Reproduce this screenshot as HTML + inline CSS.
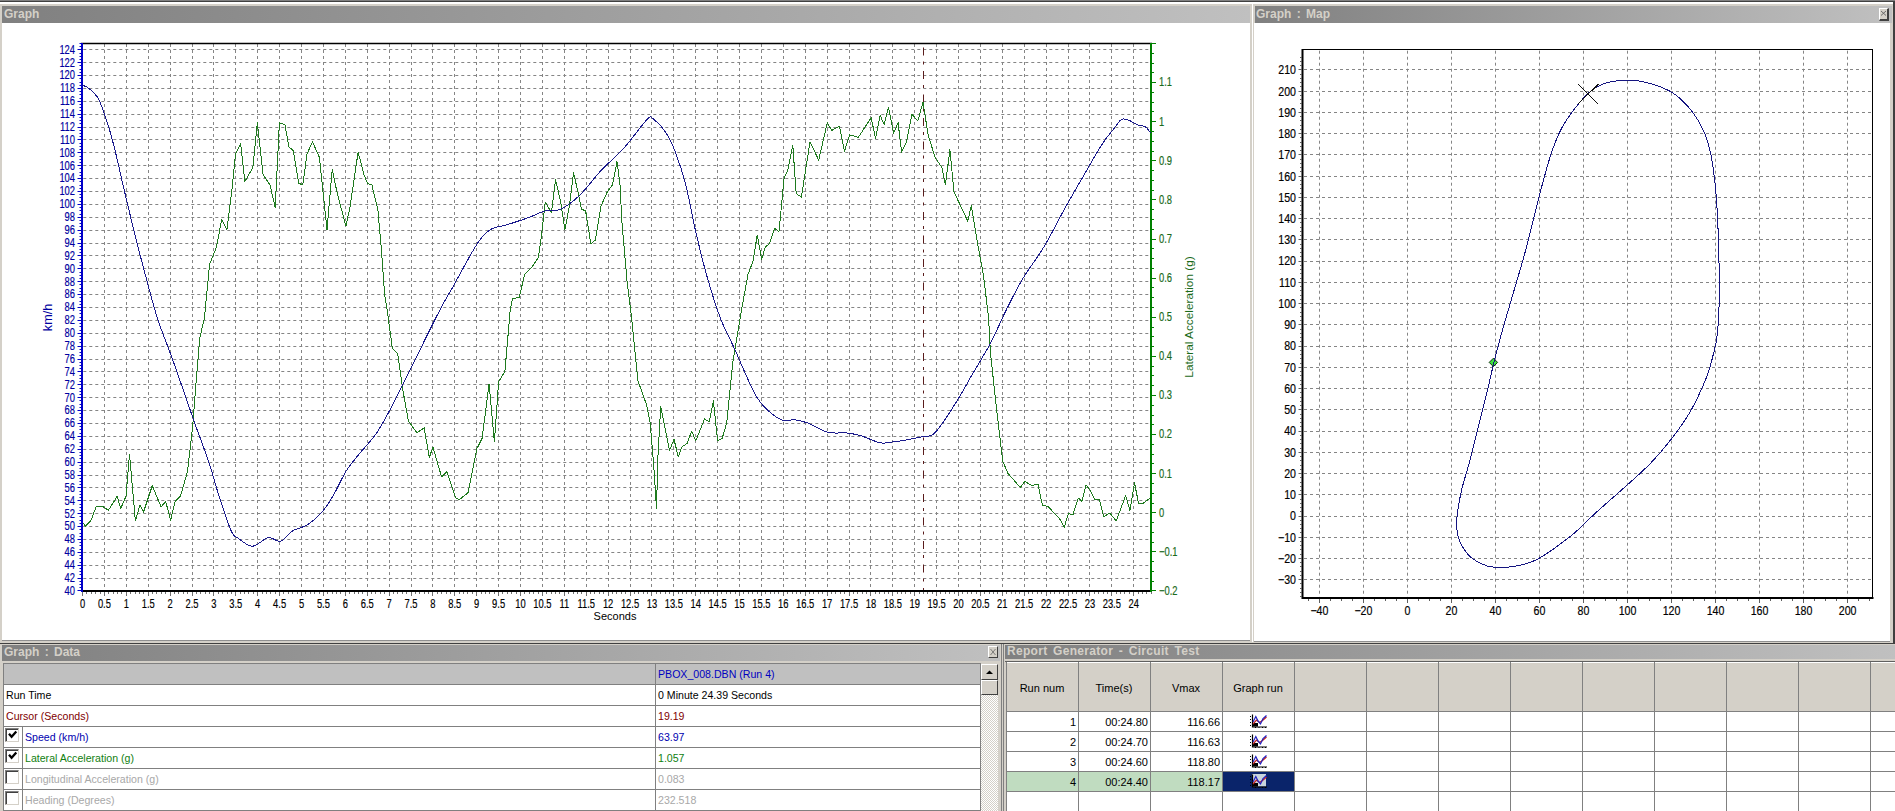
<!DOCTYPE html>
<html><head><meta charset="utf-8"><style>
html,body{margin:0;padding:0;width:1895px;height:811px;overflow:hidden;background:#d4d0c8;font-family:'Liberation Sans', sans-serif;}
.abs{position:absolute}
.tb{position:absolute;height:17px;word-spacing:2px;background:linear-gradient(to right,#808080,#c0c0c0);color:#d4d0c8;font:bold 12px 'Liberation Sans', sans-serif;line-height:17px;white-space:pre;}
.dl{position:absolute;font-size:10.6px;line-height:20px;white-space:nowrap}
.cb{position:absolute;left:5px;width:12px;height:12px;border-top:1px solid #808080;border-left:1px solid #808080;border-right:1px solid #d4d0c8;border-bottom:1px solid #d4d0c8;background:#fff;box-shadow:inset 1px 1px 0 #404040}
.ck{position:absolute;left:5px}
.rc{position:absolute;font-size:11px;line-height:14px;text-align:right;white-space:nowrap}
.rh{position:absolute;top:664px;height:49px;font-size:11px;line-height:49px;text-align:center;color:#000}
</style></head><body>
<div class="abs" style="left:0;top:0;width:1895px;height:1px;background:#808080"></div>
<div class="abs" style="left:0;top:1px;width:1895px;height:1px;background:#404040"></div>
<div class="abs" style="left:0;top:2px;width:1895px;height:2px;background:#fff"></div>

<!-- Graph panel -->
<div class="abs" style="left:2px;top:23px;width:1248px;height:617px;background:#fff"></div>
<div class="tb" style="left:2px;top:6px;width:1248px;padding-left:2px;box-sizing:border-box">Graph</div>
<!-- Map panel -->
<div class="abs" style="left:1252px;top:4px;width:1px;height:638px;background:#ffffff"></div>
<div class="abs" style="left:1254px;top:23px;width:636px;height:618px;background:#fff"></div>
<div class="tb" style="left:1255px;top:6px;width:637px;padding-left:1px;box-sizing:border-box">Graph : Map</div>
<div class="abs" style="left:1879px;top:8px;width:10px;height:13px;background:#d4d0c8;border-top:1px solid #fff;border-left:1px solid #fff;border-right:2px solid #404040;border-bottom:2px solid #404040;box-sizing:border-box"></div>
<svg class="abs" style="left:1879px;top:8px" width="10" height="13"><path d="M2 3L7 7.5M7 3L2 7.5" stroke="#606060" stroke-width="0.9"/></svg>
<div class="abs" style="left:1893px;top:2px;width:2px;height:642px;background:#404040"></div>
<div class="abs" style="left:0;top:643px;width:1895px;height:1px;background:#404040"></div>
<div class="abs" style="left:2px;top:640px;width:1248px;height:1px;background:#909090"></div>
<div class="abs" style="left:1254px;top:641px;width:636px;height:1px;background:#909090"></div>

<svg class="abs" style="left:0;top:0" width="1895" height="811">
<path d="M104.5 44.0V589.5M126.5 44.0V589.5M148.5 44.0V589.5M170.5 44.0V589.5M192.5 44.0V589.5M213.5 44.0V589.5M235.5 44.0V589.5M257.5 44.0V589.5M279.5 44.0V589.5M301.5 44.0V589.5M323.5 44.0V589.5M345.5 44.0V589.5M367.5 44.0V589.5M389.5 44.0V589.5M411.5 44.0V589.5M432.5 44.0V589.5M454.5 44.0V589.5M476.5 44.0V589.5M498.5 44.0V589.5M520.5 44.0V589.5M542.5 44.0V589.5M564.5 44.0V589.5M586.5 44.0V589.5M608.5 44.0V589.5M630.5 44.0V589.5M651.5 44.0V589.5M673.5 44.0V589.5M695.5 44.0V589.5M717.5 44.0V589.5M739.5 44.0V589.5M761.5 44.0V589.5M783.5 44.0V589.5M805.5 44.0V589.5M827.5 44.0V589.5M849.5 44.0V589.5M870.5 44.0V589.5M892.5 44.0V589.5M914.5 44.0V589.5M936.5 44.0V589.5M958.5 44.0V589.5M980.5 44.0V589.5M1002.5 44.0V589.5M1024.5 44.0V589.5M1046.5 44.0V589.5M1068.5 44.0V589.5M1089.5 44.0V589.5M1111.5 44.0V589.5M1133.5 44.0V589.5M83.3 578.5H1150.0M83.3 565.5H1150.0M83.3 552.5H1150.0M83.3 539.5H1150.0M83.3 526.5H1150.0M83.3 513.5H1150.0M83.3 500.5H1150.0M83.3 487.5H1150.0M83.3 475.5H1150.0M83.3 462.5H1150.0M83.3 449.5H1150.0M83.3 436.5H1150.0M83.3 423.5H1150.0M83.3 410.5H1150.0M83.3 397.5H1150.0M83.3 384.5H1150.0M83.3 371.5H1150.0M83.3 359.5H1150.0M83.3 346.5H1150.0M83.3 333.5H1150.0M83.3 320.5H1150.0M83.3 307.5H1150.0M83.3 294.5H1150.0M83.3 281.5H1150.0M83.3 268.5H1150.0M83.3 255.5H1150.0M83.3 243.5H1150.0M83.3 230.5H1150.0M83.3 217.5H1150.0M83.3 204.5H1150.0M83.3 191.5H1150.0M83.3 178.5H1150.0M83.3 165.5H1150.0M83.3 152.5H1150.0M83.3 139.5H1150.0M83.3 127.5H1150.0M83.3 114.5H1150.0M83.3 101.5H1150.0M83.3 88.5H1150.0M83.3 75.5H1150.0M83.3 62.5H1150.0M83.3 49.5H1150.0" stroke="#858585" stroke-width="1" stroke-dasharray="3 3" fill="none"/>
<path d="M81 43.5H1152" stroke="#000" stroke-width="1.3"/>
<path d="M81 591H1152" stroke="#000" stroke-width="2"/>
<path d="M82.5 592V596M86.5 592V594M91.5 592V594M95.5 592V594M100.5 592V594M104.5 592V596M108.5 592V594M113.5 592V594M117.5 592V594M121.5 592V594M126.5 592V596M130.5 592V594M135.5 592V594M139.5 592V594M143.5 592V594M148.5 592V596M152.5 592V594M156.5 592V594M161.5 592V594M165.5 592V594M170.5 592V596M174.5 592V594M178.5 592V594M183.5 592V594M187.5 592V594M192.5 592V596M196.5 592V594M200.5 592V594M205.5 592V594M209.5 592V594M213.5 592V596M218.5 592V594M222.5 592V594M227.5 592V594M231.5 592V594M235.5 592V596M240.5 592V594M244.5 592V594M248.5 592V594M253.5 592V594M257.5 592V596M262.5 592V594M266.5 592V594M270.5 592V594M275.5 592V594M279.5 592V596M283.5 592V594M288.5 592V594M292.5 592V594M297.5 592V594M301.5 592V596M305.5 592V594M310.5 592V594M314.5 592V594M319.5 592V594M323.5 592V596M327.5 592V594M332.5 592V594M336.5 592V594M340.5 592V594M345.5 592V596M349.5 592V594M354.5 592V594M358.5 592V594M362.5 592V594M367.5 592V596M371.5 592V594M375.5 592V594M380.5 592V594M384.5 592V594M389.5 592V596M393.5 592V594M397.5 592V594M402.5 592V594M406.5 592V594M411.5 592V596M415.5 592V594M419.5 592V594M424.5 592V594M428.5 592V594M432.5 592V596M437.5 592V594M441.5 592V594M446.5 592V594M450.5 592V594M454.5 592V596M459.5 592V594M463.5 592V594M467.5 592V594M472.5 592V594M476.5 592V596M481.5 592V594M485.5 592V594M489.5 592V594M494.5 592V594M498.5 592V596M502.5 592V594M507.5 592V594M511.5 592V594M516.5 592V594M520.5 592V596M524.5 592V594M529.5 592V594M533.5 592V594M538.5 592V594M542.5 592V596M546.5 592V594M551.5 592V594M555.5 592V594M559.5 592V594M564.5 592V596M568.5 592V594M573.5 592V594M577.5 592V594M581.5 592V594M586.5 592V596M590.5 592V594M594.5 592V594M599.5 592V594M603.5 592V594M608.5 592V596M612.5 592V594M616.5 592V594M621.5 592V594M625.5 592V594M630.5 592V596M634.5 592V594M638.5 592V594M643.5 592V594M647.5 592V594M651.5 592V596M656.5 592V594M660.5 592V594M665.5 592V594M669.5 592V594M673.5 592V596M678.5 592V594M682.5 592V594M686.5 592V594M691.5 592V594M695.5 592V596M700.5 592V594M704.5 592V594M708.5 592V594M713.5 592V594M717.5 592V596M721.5 592V594M726.5 592V594M730.5 592V594M735.5 592V594M739.5 592V596M743.5 592V594M748.5 592V594M752.5 592V594M757.5 592V594M761.5 592V596M765.5 592V594M770.5 592V594M774.5 592V594M778.5 592V594M783.5 592V596M787.5 592V594M792.5 592V594M796.5 592V594M800.5 592V594M805.5 592V596M809.5 592V594M813.5 592V594M818.5 592V594M822.5 592V594M827.5 592V596M831.5 592V594M835.5 592V594M840.5 592V594M844.5 592V594M849.5 592V596M853.5 592V594M857.5 592V594M862.5 592V594M866.5 592V594M870.5 592V596M875.5 592V594M879.5 592V594M884.5 592V594M888.5 592V594M892.5 592V596M897.5 592V594M901.5 592V594M905.5 592V594M910.5 592V594M914.5 592V596M919.5 592V594M923.5 592V594M927.5 592V594M932.5 592V594M936.5 592V596M940.5 592V594M945.5 592V594M949.5 592V594M954.5 592V594M958.5 592V596M962.5 592V594M967.5 592V594M971.5 592V594M976.5 592V594M980.5 592V596M984.5 592V594M989.5 592V594M993.5 592V594M997.5 592V594M1002.5 592V596M1006.5 592V594M1011.5 592V594M1015.5 592V594M1019.5 592V594M1024.5 592V596M1028.5 592V594M1032.5 592V594M1037.5 592V594M1041.5 592V594M1046.5 592V596M1050.5 592V594M1054.5 592V594M1059.5 592V594M1063.5 592V594M1068.5 592V596M1072.5 592V594M1076.5 592V594M1081.5 592V594M1085.5 592V594M1089.5 592V596M1094.5 592V594M1098.5 592V594M1103.5 592V594M1107.5 592V594M1111.5 592V596M1116.5 592V594M1120.5 592V594M1124.5 592V594M1129.5 592V594M1133.5 592V596M1138.5 592V594M1142.5 592V594M1146.5 592V594M1151.5 592V594" stroke="#707070" stroke-width="1"/>
<g font-family="'Liberation Sans', sans-serif" font-size="12.5" fill="#000" stroke="#000" stroke-width="0.18" text-anchor="middle"><text transform="translate(82.5,608) scale(0.75,1)">0</text><text transform="translate(104.4,608) scale(0.75,1)">0.5</text><text transform="translate(126.3,608) scale(0.75,1)">1</text><text transform="translate(148.2,608) scale(0.75,1)">1.5</text><text transform="translate(170.1,608) scale(0.75,1)">2</text><text transform="translate(192.0,608) scale(0.75,1)">2.5</text><text transform="translate(213.9,608) scale(0.75,1)">3</text><text transform="translate(235.8,608) scale(0.75,1)">3.5</text><text transform="translate(257.7,608) scale(0.75,1)">4</text><text transform="translate(279.6,608) scale(0.75,1)">4.5</text><text transform="translate(301.5,608) scale(0.75,1)">5</text><text transform="translate(323.4,608) scale(0.75,1)">5.5</text><text transform="translate(345.3,608) scale(0.75,1)">6</text><text transform="translate(367.2,608) scale(0.75,1)">6.5</text><text transform="translate(389.1,608) scale(0.75,1)">7</text><text transform="translate(411.0,608) scale(0.75,1)">7.5</text><text transform="translate(432.9,608) scale(0.75,1)">8</text><text transform="translate(454.8,608) scale(0.75,1)">8.5</text><text transform="translate(476.7,608) scale(0.75,1)">9</text><text transform="translate(498.6,608) scale(0.75,1)">9.5</text><text transform="translate(520.5,608) scale(0.75,1)">10</text><text transform="translate(542.4,608) scale(0.75,1)">10.5</text><text transform="translate(564.3,608) scale(0.75,1)">11</text><text transform="translate(586.2,608) scale(0.75,1)">11.5</text><text transform="translate(608.1,608) scale(0.75,1)">12</text><text transform="translate(630.0,608) scale(0.75,1)">12.5</text><text transform="translate(651.9,608) scale(0.75,1)">13</text><text transform="translate(673.8,608) scale(0.75,1)">13.5</text><text transform="translate(695.7,608) scale(0.75,1)">14</text><text transform="translate(717.6,608) scale(0.75,1)">14.5</text><text transform="translate(739.5,608) scale(0.75,1)">15</text><text transform="translate(761.4,608) scale(0.75,1)">15.5</text><text transform="translate(783.3,608) scale(0.75,1)">16</text><text transform="translate(805.2,608) scale(0.75,1)">16.5</text><text transform="translate(827.1,608) scale(0.75,1)">17</text><text transform="translate(849.0,608) scale(0.75,1)">17.5</text><text transform="translate(870.9,608) scale(0.75,1)">18</text><text transform="translate(892.8,608) scale(0.75,1)">18.5</text><text transform="translate(914.7,608) scale(0.75,1)">19</text><text transform="translate(936.6,608) scale(0.75,1)">19.5</text><text transform="translate(958.5,608) scale(0.75,1)">20</text><text transform="translate(980.4,608) scale(0.75,1)">20.5</text><text transform="translate(1002.3,608) scale(0.75,1)">21</text><text transform="translate(1024.2,608) scale(0.75,1)">21.5</text><text transform="translate(1046.1,608) scale(0.75,1)">22</text><text transform="translate(1068.0,608) scale(0.75,1)">22.5</text><text transform="translate(1089.9,608) scale(0.75,1)">23</text><text transform="translate(1111.8,608) scale(0.75,1)">23.5</text><text transform="translate(1133.7,608) scale(0.75,1)">24</text></g>
<path d="M82 43V592" stroke="#0000c8" stroke-width="2"/>
<path d="M77.5 590.5H81M79.5 587.5H81M79.5 584.5H81M79.5 581.5H81M77.5 578.5H81M79.5 574.5H81M79.5 571.5H81M79.5 568.5H81M77.5 565.5H81M79.5 562.5H81M79.5 558.5H81M79.5 555.5H81M77.5 552.5H81M79.5 549.5H81M79.5 545.5H81M79.5 542.5H81M77.5 539.5H81M79.5 536.5H81M79.5 533.5H81M79.5 529.5H81M77.5 526.5H81M79.5 523.5H81M79.5 520.5H81M79.5 516.5H81M77.5 513.5H81M79.5 510.5H81M79.5 507.5H81M79.5 504.5H81M77.5 500.5H81M79.5 497.5H81M79.5 494.5H81M79.5 491.5H81M77.5 487.5H81M79.5 484.5H81M79.5 481.5H81M79.5 478.5H81M77.5 475.5H81M79.5 471.5H81M79.5 468.5H81M79.5 465.5H81M77.5 462.5H81M79.5 458.5H81M79.5 455.5H81M79.5 452.5H81M77.5 449.5H81M79.5 446.5H81M79.5 442.5H81M79.5 439.5H81M77.5 436.5H81M79.5 433.5H81M79.5 429.5H81M79.5 426.5H81M77.5 423.5H81M79.5 420.5H81M79.5 417.5H81M79.5 413.5H81M77.5 410.5H81M79.5 407.5H81M79.5 404.5H81M79.5 400.5H81M77.5 397.5H81M79.5 394.5H81M79.5 391.5H81M79.5 388.5H81M77.5 384.5H81M79.5 381.5H81M79.5 378.5H81M79.5 375.5H81M77.5 371.5H81M79.5 368.5H81M79.5 365.5H81M79.5 362.5H81M77.5 359.5H81M79.5 355.5H81M79.5 352.5H81M79.5 349.5H81M77.5 346.5H81M79.5 342.5H81M79.5 339.5H81M79.5 336.5H81M77.5 333.5H81M79.5 330.5H81M79.5 326.5H81M79.5 323.5H81M77.5 320.5H81M79.5 317.5H81M79.5 313.5H81M79.5 310.5H81M77.5 307.5H81M79.5 304.5H81M79.5 301.5H81M79.5 297.5H81M77.5 294.5H81M79.5 291.5H81M79.5 288.5H81M79.5 284.5H81M77.5 281.5H81M79.5 278.5H81M79.5 275.5H81M79.5 272.5H81M77.5 268.5H81M79.5 265.5H81M79.5 262.5H81M79.5 259.5H81M77.5 255.5H81M79.5 252.5H81M79.5 249.5H81M79.5 246.5H81M77.5 243.5H81M79.5 239.5H81M79.5 236.5H81M79.5 233.5H81M77.5 230.5H81M79.5 226.5H81M79.5 223.5H81M79.5 220.5H81M77.5 217.5H81M79.5 214.5H81M79.5 210.5H81M79.5 207.5H81M77.5 204.5H81M79.5 201.5H81M79.5 197.5H81M79.5 194.5H81M77.5 191.5H81M79.5 188.5H81M79.5 185.5H81M79.5 181.5H81M77.5 178.5H81M79.5 175.5H81M79.5 172.5H81M79.5 168.5H81M77.5 165.5H81M79.5 162.5H81M79.5 159.5H81M79.5 156.5H81M77.5 152.5H81M79.5 149.5H81M79.5 146.5H81M79.5 143.5H81M77.5 139.5H81M79.5 136.5H81M79.5 133.5H81M79.5 130.5H81M77.5 127.5H81M79.5 123.5H81M79.5 120.5H81M79.5 117.5H81M77.5 114.5H81M79.5 110.5H81M79.5 107.5H81M79.5 104.5H81M77.5 101.5H81M79.5 98.5H81M79.5 94.5H81M79.5 91.5H81M77.5 88.5H81M79.5 85.5H81M79.5 82.5H81M79.5 78.5H81M77.5 75.5H81M79.5 72.5H81M79.5 69.5H81M79.5 65.5H81M77.5 62.5H81M79.5 59.5H81M79.5 56.5H81M79.5 53.5H81M77.5 49.5H81M79.5 46.5H81M79.5 43.5H81" stroke="#0000c8" stroke-width="1"/>
<g font-family="'Liberation Sans', sans-serif" font-size="12.5" fill="#0000a0" stroke="#0000a0" stroke-width="0.18" text-anchor="end"><text transform="translate(75,594.8) scale(0.75,1)">40</text><text transform="translate(75,581.9) scale(0.75,1)">42</text><text transform="translate(75,569.0) scale(0.75,1)">44</text><text transform="translate(75,556.1) scale(0.75,1)">46</text><text transform="translate(75,543.3) scale(0.75,1)">48</text><text transform="translate(75,530.4) scale(0.75,1)">50</text><text transform="translate(75,517.5) scale(0.75,1)">52</text><text transform="translate(75,504.6) scale(0.75,1)">54</text><text transform="translate(75,491.7) scale(0.75,1)">56</text><text transform="translate(75,478.8) scale(0.75,1)">58</text><text transform="translate(75,465.9) scale(0.75,1)">60</text><text transform="translate(75,453.1) scale(0.75,1)">62</text><text transform="translate(75,440.2) scale(0.75,1)">64</text><text transform="translate(75,427.3) scale(0.75,1)">66</text><text transform="translate(75,414.4) scale(0.75,1)">68</text><text transform="translate(75,401.5) scale(0.75,1)">70</text><text transform="translate(75,388.6) scale(0.75,1)">72</text><text transform="translate(75,375.7) scale(0.75,1)">74</text><text transform="translate(75,362.9) scale(0.75,1)">76</text><text transform="translate(75,350.0) scale(0.75,1)">78</text><text transform="translate(75,337.1) scale(0.75,1)">80</text><text transform="translate(75,324.2) scale(0.75,1)">82</text><text transform="translate(75,311.3) scale(0.75,1)">84</text><text transform="translate(75,298.4) scale(0.75,1)">86</text><text transform="translate(75,285.5) scale(0.75,1)">88</text><text transform="translate(75,272.7) scale(0.75,1)">90</text><text transform="translate(75,259.8) scale(0.75,1)">92</text><text transform="translate(75,246.9) scale(0.75,1)">94</text><text transform="translate(75,234.0) scale(0.75,1)">96</text><text transform="translate(75,221.1) scale(0.75,1)">98</text><text transform="translate(75,208.2) scale(0.75,1)">100</text><text transform="translate(75,195.3) scale(0.75,1)">102</text><text transform="translate(75,182.4) scale(0.75,1)">104</text><text transform="translate(75,169.6) scale(0.75,1)">106</text><text transform="translate(75,156.7) scale(0.75,1)">108</text><text transform="translate(75,143.8) scale(0.75,1)">110</text><text transform="translate(75,130.9) scale(0.75,1)">112</text><text transform="translate(75,118.0) scale(0.75,1)">114</text><text transform="translate(75,105.1) scale(0.75,1)">116</text><text transform="translate(75,92.2) scale(0.75,1)">118</text><text transform="translate(75,79.4) scale(0.75,1)">120</text><text transform="translate(75,66.5) scale(0.75,1)">122</text><text transform="translate(75,53.6) scale(0.75,1)">124</text></g>
<path d="M1151 43V592" stroke="#008000" stroke-width="2"/>
<path d="M1152 590.5H1156M1152 581.5H1154M1152 571.5H1154M1152 561.5H1154M1152 551.5H1156M1152 542.5H1154M1152 532.5H1154M1152 522.5H1154M1152 512.5H1156M1152 503.5H1154M1152 493.5H1154M1152 483.5H1154M1152 473.5H1156M1152 463.5H1154M1152 454.5H1154M1152 444.5H1154M1152 434.5H1156M1152 424.5H1154M1152 415.5H1154M1152 405.5H1154M1152 395.5H1156M1152 385.5H1154M1152 375.5H1154M1152 366.5H1154M1152 356.5H1156M1152 346.5H1154M1152 336.5H1154M1152 327.5H1154M1152 317.5H1156M1152 307.5H1154M1152 297.5H1154M1152 287.5H1154M1152 278.5H1156M1152 268.5H1154M1152 258.5H1154M1152 248.5H1154M1152 239.5H1156M1152 229.5H1154M1152 219.5H1154M1152 209.5H1154M1152 199.5H1156M1152 190.5H1154M1152 180.5H1154M1152 170.5H1154M1152 160.5H1156M1152 151.5H1154M1152 141.5H1154M1152 131.5H1154M1152 121.5H1156M1152 111.5H1154M1152 102.5H1154M1152 92.5H1154M1152 82.5H1156M1152 72.5H1154M1152 63.5H1154M1152 53.5H1154M1152 43.5H1156" stroke="#008000" stroke-width="1"/>
<g font-family="'Liberation Sans', sans-serif" font-size="12.5" fill="#1a6a1a" stroke="#1a6a1a" stroke-width="0.18"><text transform="translate(1159,594.8) scale(0.75,1)">−0.2</text><text transform="translate(1159,555.7) scale(0.75,1)">−0.1</text><text transform="translate(1159,516.6) scale(0.75,1)">0</text><text transform="translate(1159,477.5) scale(0.75,1)">0.1</text><text transform="translate(1159,438.4) scale(0.75,1)">0.2</text><text transform="translate(1159,399.2) scale(0.75,1)">0.3</text><text transform="translate(1159,360.1) scale(0.75,1)">0.4</text><text transform="translate(1159,321.0) scale(0.75,1)">0.5</text><text transform="translate(1159,281.9) scale(0.75,1)">0.6</text><text transform="translate(1159,242.8) scale(0.75,1)">0.7</text><text transform="translate(1159,203.7) scale(0.75,1)">0.8</text><text transform="translate(1159,164.6) scale(0.75,1)">0.9</text><text transform="translate(1159,125.5) scale(0.75,1)">1</text><text transform="translate(1159,86.4) scale(0.75,1)">1.1</text></g>
<text x="51.5" y="317.5" transform="rotate(-90 51.5 317.5)" font-family="'Liberation Sans', sans-serif" font-size="12.6" fill="#0000a0" text-anchor="middle">km/h</text>
<text x="1192.5" y="317" transform="rotate(-90 1192.5 317)" font-family="'Liberation Sans', sans-serif" font-size="11.8" fill="#1a6a1a" text-anchor="middle">Lateral Acceleration (g)</text>
<text x="615" y="620" font-family="'Liberation Sans', sans-serif" font-size="11" fill="#000" text-anchor="middle">Seconds</text>
<path d="M923.5 47.5V590" stroke="#5a1c1c" stroke-width="1" stroke-dasharray="8 6 3 6.5" fill="none"/>
<polyline points="82.7,522.6 85.5,526.1 90.8,520.9 96.1,506.8 103.1,506.8 108.4,510.3 117.2,496.3 120.7,508.6 126.0,496.3 129.5,454.1 135.4,520.9 140.0,505.0 143.5,512.0 152.3,485.7 161.1,506.8 165.7,501.5 170.6,520.1 175.2,501.5 180.4,496.3 187.5,471.7 192.7,426.0 196.2,380.3 199.8,338.1 204.4,317.9 209.6,264.4 216.5,247.1 221.7,219.5 226.9,229.9 232.1,188.4 235.5,153.9 240.7,143.6 244.8,181.5 252.8,167.7 257.3,122.8 263.1,174.6 270.0,185.0 275.2,207.4 279.4,122.8 284.9,124.6 289.0,147.0 293.2,150.5 298.7,183.3 302.8,185.0 307.0,153.9 312.5,141.8 319.4,157.4 327.0,229.9 332.2,169.4 337.3,193.6 346.0,226.4 350.2,205.7 358.1,152.2 364.0,174.6 367.4,183.3 371.9,185.0 377.8,209.1 381.2,247.1 384.7,295.4 387.2,310.0 392.4,348.7 397.7,353.9 403.0,390.8 408.3,420.7 417.0,433.0 424.1,427.7 429.3,457.6 432.9,447.0 441.6,476.9 446.9,471.7 455.7,498.0 459.2,499.8 468.0,492.7 476.8,448.8 482.1,438.3 489.1,383.8 494.4,441.8 498.6,382.0 504.9,371.5 510.2,310.0 512.4,298.9 519.3,297.2 524.5,274.7 531.4,267.8 538.3,257.5 541.8,233.3 545.2,202.2 551.4,212.6 555.6,179.8 560.7,202.2 564.9,229.9 569.4,205.7 573.5,172.9 578.0,191.9 581.5,209.1 585.6,210.9 590.8,243.7 595.3,240.2 601.1,205.7 607.3,191.9 612.5,185.0 617.0,161.5 620.0,185.0 622.0,223.0 627.1,281.6 631.6,317.9 637.8,380.3 646.6,404.9 650.1,422.5 653.7,464.6 656.5,508.6 657.9,457.6 660.7,406.6 669.5,450.6 674.0,439.3 678.3,456.9 681.8,447.0 687.0,443.5 691.6,431.2 695.8,440.7 704.6,418.9 709.2,421.8 713.4,400.7 717.6,440.7 722.2,438.3 726.8,422.5 732.7,362.7 741.5,310.0 747.9,274.7 753.1,260.9 757.2,235.0 761.7,259.2 765.2,247.1 769.6,243.7 774.5,228.1 779.0,231.6 784.1,178.1 787.6,171.2 792.8,145.3 796.2,193.6 801.4,197.1 810.0,141.8 818.7,160.1 827.3,122.8 831.8,130.4 839.4,126.3 844.5,151.1 849.7,134.9 858.4,137.3 871.1,117.7 875.6,138.4 880.1,115.3 884.2,124.6 888.5,107.3 893.6,133.2 898.1,122.8 901.6,152.2 906.4,141.8 911.9,114.2 917.8,121.1 923.0,102.1 928.1,134.9 935.1,157.4 942.0,167.7 945.4,185.0 949.9,149.8 954.0,191.9 967.8,221.2 971.3,205.7 978.2,247.1 983.4,274.7 988.6,317.9 990.4,352.2 995.7,401.4 1002.7,461.1 1008.0,473.4 1020.3,487.5 1024.9,481.5 1031.9,485.7 1037.9,484.0 1042.4,505.0 1048.4,506.8 1060.7,520.1 1064.2,527.2 1068.4,513.8 1073.0,514.5 1078.3,498.0 1081.8,501.5 1086.0,485.0 1090.6,491.0 1095.1,499.8 1099.4,499.8 1103.6,516.6 1109.9,513.1 1116.2,520.9 1125.7,495.5 1129.9,510.3 1134.5,482.9 1138.7,504.0 1143.3,503.3 1150.3,498.0" fill="none" stroke="#1e7a1e" stroke-width="1" stroke-linejoin="round" shape-rendering="crispEdges"/>
<path d="M81.9,84.9C83.1,85.5 86.2,86.3 88.8,88.3C91.4,90.3 95.1,93.5 97.4,97.0C99.7,100.5 100.7,103.8 102.6,109.0C104.5,114.2 106.9,121.0 109.0,128.0C111.1,135.0 112.7,140.9 115.2,151.0C117.7,161.1 120.6,174.7 123.8,188.4C127.0,202.1 131.0,218.9 134.6,233.3C138.2,247.7 141.5,260.6 145.3,274.7C149.1,288.8 153.2,305.0 157.3,317.9C161.4,330.8 166.3,342.4 169.9,352.2C173.5,362.0 174.6,365.1 178.7,376.8C182.8,388.5 189.5,408.4 194.5,422.5C199.5,436.6 204.4,448.8 208.5,461.1C212.6,473.4 215.3,484.6 219.1,496.3C222.9,508.0 228.2,524.4 231.4,531.4C234.6,538.4 234.9,535.9 238.4,538.4C241.9,540.9 247.5,546.3 252.5,546.2C257.5,546.1 263.6,538.5 268.3,537.7C273.0,536.9 276.5,542.4 280.6,541.2C284.7,540.0 288.5,533.4 292.9,530.7C297.3,528.0 302.2,528.0 306.9,525.1C311.6,522.2 316.6,518.1 321.0,513.3C325.4,508.4 328.8,503.1 333.0,496.0C337.2,488.9 341.9,477.8 346.3,470.8C350.7,463.8 354.1,460.4 359.1,454.1C364.2,447.8 371.3,440.6 376.6,433.0C381.9,425.4 385.4,418.3 390.7,408.4C396.0,398.4 400.1,389.7 408.3,373.3C416.5,356.9 432.6,324.1 439.9,310.0C447.2,295.9 445.9,299.3 452.0,288.5C458.1,277.7 469.9,255.2 476.2,245.4C482.5,235.6 484.8,233.4 490.0,229.9C495.2,226.4 500.9,226.7 507.2,224.7C513.5,222.7 521.7,220.1 528.0,217.8C534.3,215.5 539.8,212.4 545.2,210.9C550.7,209.4 555.0,211.7 560.7,209.1C566.5,206.5 573.1,201.6 579.7,195.3C586.3,189.0 593.7,178.4 600.4,171.2C607.1,164.0 615.1,157.4 620.1,152.2C625.1,147.0 625.9,145.7 630.5,140.1C635.1,134.5 644.0,122.3 647.8,118.7C651.5,115.1 650.1,116.6 653.0,118.7C655.9,120.8 661.4,125.9 665.1,131.5C668.8,137.1 672.0,143.3 675.4,152.2C678.8,161.1 682.3,171.5 685.8,185.0C689.2,198.5 692.6,218.4 696.1,233.3C699.6,248.2 702.5,260.6 706.5,274.7C710.5,288.8 715.6,305.6 720.3,317.9C725.0,330.2 730.1,338.9 734.5,348.7C738.9,358.5 743.0,368.6 746.8,376.8C750.6,385.0 753.5,392.0 757.3,397.9C761.1,403.8 765.2,408.1 769.6,411.9C774.0,415.7 779.6,419.4 783.7,420.7C787.8,422.0 790.1,419.2 794.2,419.6C798.3,420.0 802.7,421.1 808.3,423.2C813.9,425.3 821.2,430.7 827.6,432.3C834.0,433.9 841.3,432.4 846.9,433.0C852.5,433.6 855.4,434.2 861.0,435.8C866.6,437.4 874.8,441.8 880.3,442.8C885.8,443.8 889.5,442.3 893.8,441.8C898.1,441.3 901.7,440.8 906.1,440.0C910.5,439.2 915.7,438.1 920.1,437.2C924.5,436.3 928.6,437.2 932.4,434.8C936.2,432.4 938.6,428.6 943.0,422.5C947.4,416.4 953.8,406.1 958.8,397.9C963.8,389.7 967.6,382.4 972.9,373.3C978.2,364.2 984.8,353.9 990.4,343.4C996.0,332.8 1000.8,320.9 1006.2,310.0C1011.7,299.1 1016.8,288.7 1023.1,278.2C1029.4,267.7 1036.9,258.6 1043.8,247.1C1050.7,235.6 1057.6,221.5 1064.5,209.1C1071.4,196.7 1078.9,183.8 1085.2,172.9C1091.5,162.0 1097.6,151.1 1102.5,143.6C1107.4,136.1 1111.3,132.0 1114.5,128.0C1117.7,124.0 1119.2,120.7 1121.5,119.4C1123.8,118.1 1125.8,119.2 1128.4,120.1C1131.0,121.0 1134.1,123.4 1137.0,124.6C1139.9,125.8 1143.3,125.6 1145.6,127.0C1147.9,128.4 1149.9,132.2 1150.8,133.2" fill="none" stroke="#1a1a8c" stroke-width="1" stroke-linejoin="round" shape-rendering="crispEdges"/>
<path d="M1319.5 50.7V596.8M1363.5 50.7V596.8M1407.5 50.7V596.8M1451.5 50.7V596.8M1495.5 50.7V596.8M1539.5 50.7V596.8M1583.5 50.7V596.8M1627.5 50.7V596.8M1671.5 50.7V596.8M1715.5 50.7V596.8M1759.5 50.7V596.8M1803.5 50.7V596.8M1847.5 50.7V596.8M1304.0 579.5H1871.6M1304.0 558.5H1871.6M1304.0 537.5H1871.6M1304.0 516.5H1871.6M1304.0 494.5H1871.6M1304.0 473.5H1871.6M1304.0 452.5H1871.6M1304.0 431.5H1871.6M1304.0 409.5H1871.6M1304.0 388.5H1871.6M1304.0 367.5H1871.6M1304.0 346.5H1871.6M1304.0 324.5H1871.6M1304.0 303.5H1871.6M1304.0 282.5H1871.6M1304.0 261.5H1871.6M1304.0 239.5H1871.6M1304.0 218.5H1871.6M1304.0 197.5H1871.6M1304.0 176.5H1871.6M1304.0 154.5H1871.6M1304.0 133.5H1871.6M1304.0 112.5H1871.6M1304.0 91.5H1871.6M1304.0 69.5H1871.6" stroke="#858585" stroke-width="1" stroke-dasharray="3 3" fill="none"/>
<rect x="1302.5" y="49.5" width="570" height="548" fill="none" stroke="#000" stroke-width="1"/>
<path d="M1302.5 49V599" stroke="#000" stroke-width="2"/>
<path d="M1302 598H1873.5" stroke="#000" stroke-width="2"/>
<path d="M1300 596.5H1302M1300 592.5H1302M1300 588.5H1302M1300 583.5H1302M1298.5 579.5H1302M1300 575.5H1302M1300 571.5H1302M1300 566.5H1302M1300 562.5H1302M1298.5 558.5H1302M1300 554.5H1302M1300 549.5H1302M1300 545.5H1302M1300 541.5H1302M1298.5 537.5H1302M1300 532.5H1302M1300 528.5H1302M1300 524.5H1302M1300 520.5H1302M1298.5 516.5H1302M1300 511.5H1302M1300 507.5H1302M1300 503.5H1302M1300 499.5H1302M1298.5 494.5H1302M1300 490.5H1302M1300 486.5H1302M1300 482.5H1302M1300 477.5H1302M1298.5 473.5H1302M1300 469.5H1302M1300 465.5H1302M1300 460.5H1302M1300 456.5H1302M1298.5 452.5H1302M1300 448.5H1302M1300 443.5H1302M1300 439.5H1302M1300 435.5H1302M1298.5 431.5H1302M1300 426.5H1302M1300 422.5H1302M1300 418.5H1302M1300 414.5H1302M1298.5 409.5H1302M1300 405.5H1302M1300 401.5H1302M1300 397.5H1302M1300 392.5H1302M1298.5 388.5H1302M1300 384.5H1302M1300 380.5H1302M1300 375.5H1302M1300 371.5H1302M1298.5 367.5H1302M1300 363.5H1302M1300 358.5H1302M1300 354.5H1302M1300 350.5H1302M1298.5 346.5H1302M1300 341.5H1302M1300 337.5H1302M1300 333.5H1302M1300 329.5H1302M1298.5 324.5H1302M1300 320.5H1302M1300 316.5H1302M1300 312.5H1302M1300 307.5H1302M1298.5 303.5H1302M1300 299.5H1302M1300 295.5H1302M1300 290.5H1302M1300 286.5H1302M1298.5 282.5H1302M1300 278.5H1302M1300 273.5H1302M1300 269.5H1302M1300 265.5H1302M1298.5 261.5H1302M1300 256.5H1302M1300 252.5H1302M1300 248.5H1302M1300 244.5H1302M1298.5 239.5H1302M1300 235.5H1302M1300 231.5H1302M1300 227.5H1302M1300 222.5H1302M1298.5 218.5H1302M1300 214.5H1302M1300 210.5H1302M1300 205.5H1302M1300 201.5H1302M1298.5 197.5H1302M1300 193.5H1302M1300 188.5H1302M1300 184.5H1302M1300 180.5H1302M1298.5 176.5H1302M1300 171.5H1302M1300 167.5H1302M1300 163.5H1302M1300 159.5H1302M1298.5 154.5H1302M1300 150.5H1302M1300 146.5H1302M1300 142.5H1302M1300 137.5H1302M1298.5 133.5H1302M1300 129.5H1302M1300 125.5H1302M1300 120.5H1302M1300 116.5H1302M1298.5 112.5H1302M1300 108.5H1302M1300 103.5H1302M1300 99.5H1302M1300 95.5H1302M1298.5 91.5H1302M1300 86.5H1302M1300 82.5H1302M1300 78.5H1302M1300 74.5H1302M1298.5 69.5H1302M1300 65.5H1302M1300 61.5H1302M1300 57.5H1302M1308.5 599V601M1319.5 599V603M1330.5 599V601M1341.5 599V601M1352.5 599V601M1363.5 599V603M1374.5 599V601M1385.5 599V601M1396.5 599V601M1407.5 599V603M1418.5 599V601M1429.5 599V601M1440.5 599V601M1451.5 599V603M1462.5 599V601M1473.5 599V601M1484.5 599V601M1495.5 599V603M1506.5 599V601M1517.5 599V601M1528.5 599V601M1539.5 599V603M1550.5 599V601M1561.5 599V601M1572.5 599V601M1583.5 599V603M1594.5 599V601M1605.5 599V601M1616.5 599V601M1627.5 599V603M1638.5 599V601M1649.5 599V601M1660.5 599V601M1671.5 599V603M1682.5 599V601M1693.5 599V601M1704.5 599V601M1715.5 599V603M1726.5 599V601M1737.5 599V601M1748.5 599V601M1759.5 599V603M1770.5 599V601M1781.5 599V601M1792.5 599V601M1803.5 599V603M1814.5 599V601M1825.5 599V601M1836.5 599V601M1847.5 599V603M1858.5 599V601M1869.5 599V601" stroke="#606060" stroke-width="1"/>
<g font-family="'Liberation Sans', sans-serif" font-size="12.5" fill="#000" stroke="#000" stroke-width="0.18" text-anchor="end"><text transform="translate(1296,584.0) scale(0.85,1)">−30</text><text transform="translate(1296,562.8) scale(0.85,1)">−20</text><text transform="translate(1296,541.5) scale(0.85,1)">−10</text><text transform="translate(1296,520.3) scale(0.85,1)">0</text><text transform="translate(1296,499.1) scale(0.85,1)">10</text><text transform="translate(1296,477.8) scale(0.85,1)">20</text><text transform="translate(1296,456.6) scale(0.85,1)">30</text><text transform="translate(1296,435.3) scale(0.85,1)">40</text><text transform="translate(1296,414.1) scale(0.85,1)">50</text><text transform="translate(1296,392.9) scale(0.85,1)">60</text><text transform="translate(1296,371.6) scale(0.85,1)">70</text><text transform="translate(1296,350.4) scale(0.85,1)">80</text><text transform="translate(1296,329.1) scale(0.85,1)">90</text><text transform="translate(1296,307.9) scale(0.85,1)">100</text><text transform="translate(1296,286.7) scale(0.85,1)">110</text><text transform="translate(1296,265.4) scale(0.85,1)">120</text><text transform="translate(1296,244.2) scale(0.85,1)">130</text><text transform="translate(1296,222.9) scale(0.85,1)">140</text><text transform="translate(1296,201.7) scale(0.85,1)">150</text><text transform="translate(1296,180.5) scale(0.85,1)">160</text><text transform="translate(1296,159.2) scale(0.85,1)">170</text><text transform="translate(1296,138.0) scale(0.85,1)">180</text><text transform="translate(1296,116.7) scale(0.85,1)">190</text><text transform="translate(1296,95.5) scale(0.85,1)">200</text><text transform="translate(1296,74.3) scale(0.85,1)">210</text></g>
<g font-family="'Liberation Sans', sans-serif" font-size="12.5" fill="#000" stroke="#000" stroke-width="0.18" text-anchor="middle"><text transform="translate(1319.4,615) scale(0.85,1)">−40</text><text transform="translate(1363.4,615) scale(0.85,1)">−20</text><text transform="translate(1407.4,615) scale(0.85,1)">0</text><text transform="translate(1451.4,615) scale(0.85,1)">20</text><text transform="translate(1495.4,615) scale(0.85,1)">40</text><text transform="translate(1539.4,615) scale(0.85,1)">60</text><text transform="translate(1583.5,615) scale(0.85,1)">80</text><text transform="translate(1627.5,615) scale(0.85,1)">100</text><text transform="translate(1671.5,615) scale(0.85,1)">120</text><text transform="translate(1715.5,615) scale(0.85,1)">140</text><text transform="translate(1759.5,615) scale(0.85,1)">160</text><text transform="translate(1803.5,615) scale(0.85,1)">180</text><text transform="translate(1847.6,615) scale(0.85,1)">200</text></g>
<path d="M1493.4 358.2L1497.6 362.4L1493.4 366.6L1489.2 362.4Z" fill="#3ee03e" stroke="#0c300c" stroke-width="1"/>
<path d="M1588.8,92.8C1593.4,88.8 1597.7,86.2 1602.6,84.2C1607.5,82.2 1612.3,81.3 1618.1,80.7C1623.8,80.1 1630.5,79.8 1637.1,80.7C1643.7,81.6 1651.5,83.6 1657.8,85.9C1664.1,88.2 1669.3,90.2 1675.1,94.5C1680.8,98.8 1687.4,105.5 1692.3,111.8C1697.2,118.1 1701.2,125.0 1704.4,132.5C1707.6,140.0 1709.4,146.9 1711.3,156.7C1713.2,166.5 1714.6,178.5 1715.8,191.2C1717.0,203.8 1717.6,217.1 1718.2,232.6C1718.8,248.1 1719.2,269.8 1719.3,284.4C1719.3,299.0 1719.0,310.7 1718.5,320.0C1718.0,329.3 1717.5,333.7 1716.5,340.0C1715.5,346.3 1714.1,351.6 1712.4,358.0C1710.7,364.4 1709.7,369.4 1706.1,378.3C1702.5,387.2 1696.3,401.0 1690.6,411.1C1684.8,421.2 1678.2,430.1 1671.6,438.7C1665.0,447.3 1658.4,455.1 1650.9,462.9C1643.4,470.7 1636.0,477.0 1626.8,485.3C1617.6,493.6 1604.9,504.5 1595.7,512.9C1586.5,521.2 1581.3,527.6 1571.5,535.4C1561.7,543.2 1546.8,554.3 1537.0,559.5C1527.2,564.7 1519.7,565.2 1512.8,566.5C1505.9,567.8 1500.8,567.9 1495.6,567.5C1490.4,567.1 1486.4,566.2 1481.8,564.0C1477.2,561.8 1471.9,558.9 1468.0,554.4C1464.1,549.9 1460.1,543.1 1458.3,537.1C1456.5,531.1 1456.4,525.6 1456.9,518.1C1457.4,510.6 1459.0,501.7 1461.1,492.2C1463.2,482.7 1466.8,472.1 1469.7,461.2C1472.6,450.3 1475.4,438.2 1478.3,426.7C1481.2,415.2 1484.4,402.8 1487.0,392.1C1489.6,381.5 1491.3,373.2 1493.9,362.8C1496.5,352.4 1499.3,341.4 1502.5,330.0C1505.7,318.6 1508.8,308.6 1512.8,294.7C1516.8,280.8 1522.4,262.5 1526.7,246.4C1531.0,230.3 1534.7,213.3 1538.7,198.1C1542.7,182.8 1547.0,166.4 1550.8,154.9C1554.5,143.4 1557.2,136.8 1561.2,129.0C1565.2,121.2 1570.4,114.3 1575.0,108.3C1579.6,102.3 1584.2,96.8 1588.8,92.8" fill="none" stroke="#141480" stroke-width="1" stroke-linejoin="round" shape-rendering="crispEdges"/>
<path d="M1578 84L1598.5 104.5M1578 104L1598.5 84" stroke="#101010" stroke-width="1" shape-rendering="crispEdges"/>
</svg>

<!-- Data panel -->
<div class="tb" style="left:2px;top:645px;width:998px;height:16px;line-height:15px;padding-left:2px;box-sizing:border-box">Graph : Data</div>
<div class="abs" style="left:988px;top:646px;width:10px;height:12px;background:#d4d0c8;border-top:1px solid #fff;border-left:1px solid #fff;border-right:1px solid #404040;border-bottom:1px solid #404040;box-sizing:border-box"></div>
<svg class="abs" style="left:988px;top:646px" width="10" height="12"><path d="M2.5 3L7.5 9M7.5 3L2.5 9" stroke="#707070" stroke-width="0.9"/></svg>
<div class="abs" style="left:3px;top:663px;width:978px;height:148px;background:#fff"></div>
<div class="abs" style="left:3px;top:663px;width:978px;height:21px;background:#c0c0c0"></div>
<svg class="abs" style="left:0;top:0" width="1000" height="811">
<path d="M3 663.5H981M3 684.5H981M3 705.5H981M3 726.5H981M3 747.5H981M3 768.5H981M3 789.5H981M3 810.5H981" stroke="#808080"/>
<path d="M655.5 663V811M3.5 663V811M980.5 663V811M22.5 726V811" stroke="#808080"/>
</svg>
<div class="dl" style="top:664px;left:658px;color:#0000c0">PBOX_008.DBN (Run 4)</div>
<div class="dl" style="top:685px;left:6px;color:#000">Run Time</div>
<div class="dl" style="top:685px;left:658px;color:#000">0 Minute 24.39 Seconds</div>
<div class="dl" style="top:706px;left:6px;color:#800000">Cursor (Seconds)</div>
<div class="dl" style="top:706px;left:658px;color:#800000">19.19</div>
<div class="dl" style="top:727px;left:25px;color:#0000b0">Speed (km/h)</div>
<div class="dl" style="top:727px;left:658px;color:#0000b0">63.97</div>
<div class="cb" style="top:728px"></div>
<svg class="ck" style="top:728px" width="14" height="14"><path d="M4 5.8L6.6 8.8L11.3 3.6" stroke="#000" stroke-width="2.3" fill="none"/></svg>
<div class="dl" style="top:748px;left:25px;color:#108010">Lateral Acceleration (g)</div>
<div class="dl" style="top:748px;left:658px;color:#108010">1.057</div>
<div class="cb" style="top:749px"></div>
<svg class="ck" style="top:749px" width="14" height="14"><path d="M4 5.8L6.6 8.8L11.3 3.6" stroke="#000" stroke-width="2.3" fill="none"/></svg>
<div class="dl" style="top:769px;left:25px;color:#a8a8a8">Longitudinal Acceleration (g)</div>
<div class="dl" style="top:769px;left:658px;color:#a8a8a8">0.083</div>
<div class="cb" style="top:770px"></div>
<div class="dl" style="top:790px;left:25px;color:#a8a8a8">Heading (Degrees)</div>
<div class="dl" style="top:790px;left:658px;color:#a8a8a8">232.518</div>
<div class="cb" style="top:791px"></div>
<!-- scrollbar -->
<div class="abs" style="left:981px;top:664px;width:17px;height:147px;background:repeating-conic-gradient(#d4d0c8 0 25%,#fff 0 50%) 0 0/2px 2px"></div>
<div class="abs" style="left:981px;top:664px;width:17px;height:16px;background:#d4d0c8;border-top:1px solid #fff;border-left:1px solid #fff;border-right:1px solid #404040;border-bottom:1px solid #404040;box-sizing:border-box"></div>
<svg class="abs" style="left:981px;top:664px" width="17" height="16"><path d="M5 10H12L8.5 6.5Z" fill="#000"/></svg>
<div class="abs" style="left:981px;top:680px;width:17px;height:15px;background:#d4d0c8;border-top:1px solid #fff;border-left:1px solid #fff;border-right:1px solid #404040;border-bottom:1px solid #404040;box-sizing:border-box"></div>
<div class="abs" style="left:1001px;top:644px;width:1px;height:167px;background:#808080"></div>
<div class="abs" style="left:1003px;top:644px;width:1px;height:167px;background:#808080"></div>

<!-- Report panel -->
<div class="tb" style="left:1005px;top:645px;width:890px;height:14px;line-height:13px;padding-left:2px;box-sizing:border-box;letter-spacing:0.3px">Report Generator - Circuit Test</div>
<div class="abs" style="left:1006px;top:662px;width:889px;height:149px;background:#fff"></div>
<div class="abs" style="left:1006px;top:662px;width:889px;height:49px;background:#d4d0c8"></div>
<div class="abs" style="left:1005px;top:661px;width:890px;height:1px;background:#606060"></div>
<div class="abs" style="left:1006px;top:662px;width:889px;height:1px;background:#fff"></div>
<div class="abs" style="left:1006px;top:771px;width:217px;height:20px;background:#c0dcc0"></div>
<div class="abs" style="left:1223px;top:771px;width:72px;height:20px;background:#0a246a"></div>
<div class="rh" style="left:1006px;width:72px">Run num</div>
<div class="rh" style="left:1078px;width:72px">Time(s)</div>
<div class="rh" style="left:1150px;width:72px">Vmax</div>
<div class="rh" style="left:1222px;width:72px">Graph run</div>
<svg class="abs" style="left:0;top:0" width="1895" height="811">
<path d="M1006.5 662V811M1078.5 662V811M1150.5 662V811M1222.5 662V811M1294.5 662V811M1366.5 662V811M1438.5 662V811M1510.5 662V811M1582.5 662V811M1654.5 662V811M1726.5 662V811M1798.5 662V811M1870.5 662V811M1942.5 662V811" stroke="#808080" stroke-width="1"/>
<path d="M1006 711.5H1895M1006 731.5H1895M1006 751.5H1895M1006 771.5H1895M1006 791.5H1895M1006 711.5H1895" stroke="#808080" stroke-width="1"/>
</svg>
<div class="rc" style="top:715px;left:1006px;width:70px">1</div>
<div class="rc" style="top:715px;left:1079px;width:69px">00:24.80</div>
<div class="rc" style="top:715px;left:1151px;width:69px">116.66</div>
<div style="position:absolute;top:714px;left:1250px;width:17px;height:16px"><svg width="17" height="16" viewBox="0 0 17 16"><path d="M0 2.5H2M0 5.5H2M0 8.5H2M0 11.5H2M5.5 13V15M9 13V15M12.5 13V15M15.5 13V15" stroke="#000" stroke-width="1" stroke-dasharray="1 1"/><path d="M2.5 0.5V13H17" stroke="#000" stroke-width="1.2" fill="none"/><rect x="3" y="9" width="5" height="3.5" fill="#000"/><path d="M3 10L6.5 6L9.5 8.5L12.5 6.5L16.5 3" stroke="#c02020" stroke-width="1.2" fill="none"/><path d="M3 8L5.8 2.5L8 7L10.5 10L13 4.5L16.5 1.5" stroke="#2020c0" stroke-width="1.2" fill="none"/></svg></div>
<div class="rc" style="top:735px;left:1006px;width:70px">2</div>
<div class="rc" style="top:735px;left:1079px;width:69px">00:24.70</div>
<div class="rc" style="top:735px;left:1151px;width:69px">116.63</div>
<div style="position:absolute;top:734px;left:1250px;width:17px;height:16px"><svg width="17" height="16" viewBox="0 0 17 16"><path d="M0 2.5H2M0 5.5H2M0 8.5H2M0 11.5H2M5.5 13V15M9 13V15M12.5 13V15M15.5 13V15" stroke="#000" stroke-width="1" stroke-dasharray="1 1"/><path d="M2.5 0.5V13H17" stroke="#000" stroke-width="1.2" fill="none"/><rect x="3" y="9" width="5" height="3.5" fill="#000"/><path d="M3 10L6.5 6L9.5 8.5L12.5 6.5L16.5 3" stroke="#c02020" stroke-width="1.2" fill="none"/><path d="M3 8L5.8 2.5L8 7L10.5 10L13 4.5L16.5 1.5" stroke="#2020c0" stroke-width="1.2" fill="none"/></svg></div>
<div class="rc" style="top:755px;left:1006px;width:70px">3</div>
<div class="rc" style="top:755px;left:1079px;width:69px">00:24.60</div>
<div class="rc" style="top:755px;left:1151px;width:69px">118.80</div>
<div style="position:absolute;top:754px;left:1250px;width:17px;height:16px"><svg width="17" height="16" viewBox="0 0 17 16"><path d="M0 2.5H2M0 5.5H2M0 8.5H2M0 11.5H2M5.5 13V15M9 13V15M12.5 13V15M15.5 13V15" stroke="#000" stroke-width="1" stroke-dasharray="1 1"/><path d="M2.5 0.5V13H17" stroke="#000" stroke-width="1.2" fill="none"/><rect x="3" y="9" width="5" height="3.5" fill="#000"/><path d="M3 10L6.5 6L9.5 8.5L12.5 6.5L16.5 3" stroke="#c02020" stroke-width="1.2" fill="none"/><path d="M3 8L5.8 2.5L8 7L10.5 10L13 4.5L16.5 1.5" stroke="#2020c0" stroke-width="1.2" fill="none"/></svg></div>
<div class="rc" style="top:775px;left:1006px;width:70px">4</div>
<div class="rc" style="top:775px;left:1079px;width:69px">00:24.40</div>
<div class="rc" style="top:775px;left:1151px;width:69px">118.17</div>
<div style="position:absolute;top:774px;left:1250px;width:17px;height:16px"><svg width="17" height="16" viewBox="0 0 17 16"><rect x="2" y="0" width="14" height="12.5" fill="#c8d4dc"/><path d="M0 2.5H2M0 5.5H2M0 8.5H2M0 11.5H2M5.5 13V15M9 13V15M12.5 13V15M15.5 13V15" stroke="#000" stroke-width="1" stroke-dasharray="1 1"/><path d="M2.5 0.5V13H17" stroke="#000" stroke-width="1.2" fill="none"/><rect x="3" y="9" width="5" height="3.5" fill="#000"/><path d="M3 10L6.5 6L9.5 8.5L12.5 6.5L16.5 3" stroke="#c02020" stroke-width="1.2" fill="none"/><path d="M3 8L5.8 2.5L8 7L10.5 10L13 4.5L16.5 1.5" stroke="#2020c0" stroke-width="1.2" fill="none"/></svg></div>
</body></html>
